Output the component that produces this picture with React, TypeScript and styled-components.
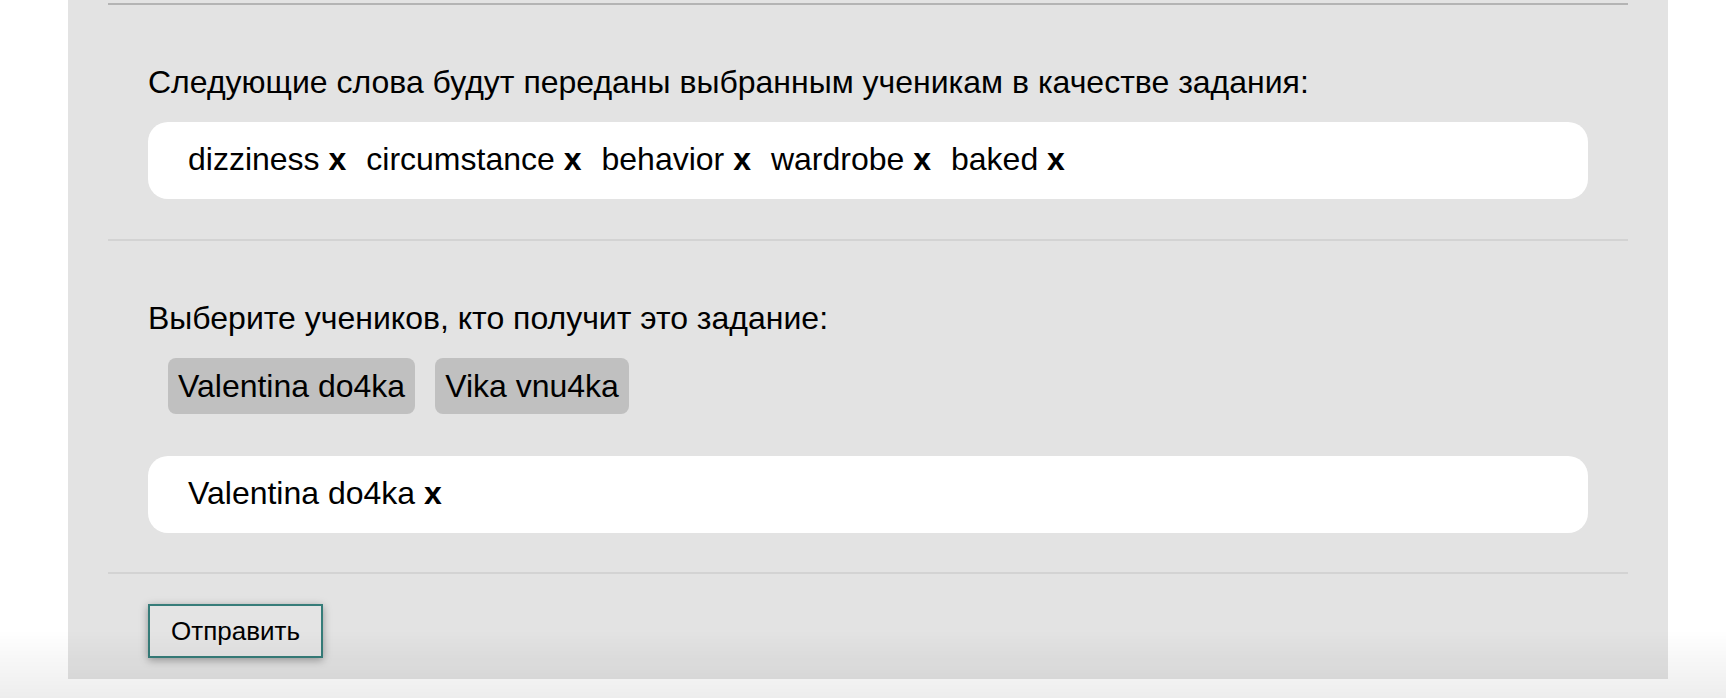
import React from "react";
import styled, { createGlobalStyle } from "styled-components";

const GlobalStyle = createGlobalStyle`
  html, body {
    margin: 0;
    padding: 0;
    background: #ffffff;
  }
  body {
    font-family: "Liberation Sans", Arial, sans-serif;
    color: #000;
    overflow: hidden;
  }
  * { box-sizing: border-box; }
`;

const Page = styled.div`
  padding-left: 68px;
  height: 698px;
`;

const Panel = styled.div`
  width: 1600px;
  background: #e3e3e3;
  padding: 0 40px;
`;

const PrevSectionTail = styled.div`
  height: 5px;
  border-bottom: 2px solid #b4b4b4;
`;

const Section = styled.section<{ $top: number; $bottom: number; $rule?: boolean }>`
  padding: ${(p) => p.$top}px 40px ${(p) => p.$bottom}px;
  border-bottom: ${(p) => (p.$rule ? "2px solid #d3d3d3" : "none")};
`;

const Heading = styled.p`
  margin: 0 0 22px;
  font-size: 32px;
  line-height: 36px;
`;

const TagBox = styled.div`
  height: 77px;
  background: #ffffff;
  border-radius: 20px;
  padding: 0 40px 3px;
  display: flex;
  align-items: center;
  font-size: 32px;
  line-height: 36px;
`;

const Tag = styled.span`
  margin-right: 20px;
  white-space: nowrap;
`;

const Remove = styled.b`
  font-weight: 700;
`;

const ChipRow = styled.div`
  display: flex;
  gap: 20px;
  padding-left: 20px;
  margin-bottom: 42px;
`;

const Chip = styled.span`
  height: 56px;
  display: inline-flex;
  align-items: center;
  padding: 0 10px;
  background: #c0c0c0;
  border-radius: 8px;
  font-size: 32px;
  line-height: 36px;
`;

const SendButton = styled.button`
  height: 54px;
  padding: 0 21px;
  background: #e4e4e4;
  border: 2px solid #367c79;
  border-radius: 0;
  box-shadow: 0 2px 8px rgba(0, 0, 0, 0.35);
  font-family: "Liberation Sans", Arial, sans-serif;
  font-size: 26px;
  color: #000;
  cursor: pointer;
`;

const BottomFade = styled.div`
  position: fixed;
  left: 0;
  right: 0;
  bottom: 0;
  height: 68px;
  pointer-events: none;
  background: linear-gradient(to bottom, rgba(0, 0, 0, 0), rgba(0, 0, 0, 0.07));
`;

const words = ["dizziness", "circumstance", "behavior", "wardrobe", "baked"];
const students = ["Valentina do4ka", "Vika vnu4ka"];
const selected = ["Valentina do4ka"];

export default function App() {
  return (
    <>
      <GlobalStyle />
      <Page>
        <Panel>
          <PrevSectionTail />
          <Section $top={59} $bottom={40} $rule>
            <Heading>Следующие слова будут переданы выбранным ученикам в качестве задания:</Heading>
            <TagBox>
              {words.map((w) => (
                <Tag key={w}>
                  {w} <Remove>x</Remove>
                </Tag>
              ))}
            </TagBox>
          </Section>
          <Section $top={59} $bottom={39} $rule>
            <Heading>Выберите учеников, кто получит это задание:</Heading>
            <ChipRow>
              {students.map((s) => (
                <Chip key={s}>{s}</Chip>
              ))}
            </ChipRow>
            <TagBox>
              {selected.map((s) => (
                <Tag key={s}>
                  {s} <Remove>x</Remove>
                </Tag>
              ))}
            </TagBox>
          </Section>
          <Section $top={30} $bottom={21}>
            <SendButton type="button">Отправить</SendButton>
          </Section>
        </Panel>
      </Page>
      <BottomFade />
    </>
  );
}
